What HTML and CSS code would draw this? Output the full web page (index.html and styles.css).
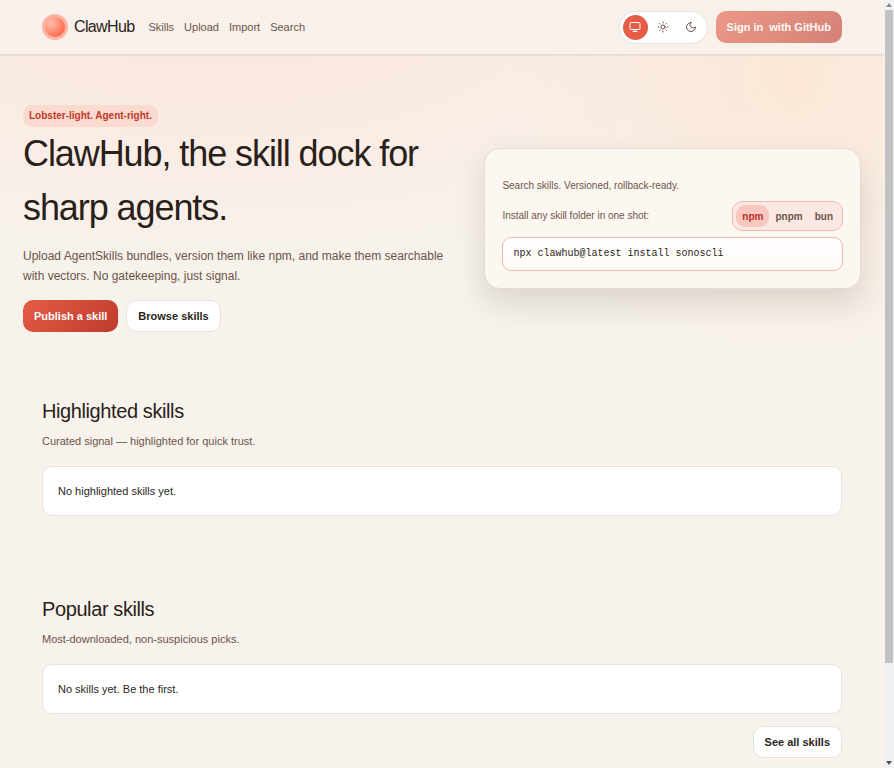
FILE: index.html
```html
<!DOCTYPE html>
<html lang="en">
<head>
    <meta charset="UTF-8">
    <meta name="viewport" content="width=device-width, initial-scale=1.0">
    <title>ClawHub</title>
    <link rel="stylesheet" href="styles.css">
</head>
<body>
    <div class="page">
        <header class="navbar">
            <a class="brand" href="#"><span class="brand-mark"></span>ClawHub</a>
            <nav class="nav-links">
                <a href="#">Skills</a>
                <a href="#">Upload</a>
                <a href="#">Import</a>
                <a href="#">Search</a>
            </nav>
            <div class="nav-actions">
                <div class="theme-toggle">
                    <button class="active" type="button" aria-label="System theme">
                        <svg viewBox="0 0 24 24"><rect x="2" y="3" width="20" height="14" rx="2"/><path d="M8 21h8M12 17v4"/></svg>
                    </button>
                    <button type="button" aria-label="Light theme">
                        <svg viewBox="0 0 24 24"><circle cx="12" cy="12" r="4"/><path d="M12 2v2M12 20v2M4.9 4.9l1.4 1.4M17.7 17.7l1.4 1.4M2 12h2M20 12h2M6.3 17.7l-1.4 1.4M19.1 4.9l-1.4 1.4"/></svg>
                    </button>
                    <button type="button" aria-label="Dark theme">
                        <svg viewBox="0 0 24 24"><path d="M12 3a6 6 0 0 0 9 9 9 9 0 1 1-9-9Z"/></svg>
                    </button>
                </div>
                <button class="btn btn-primary" type="button" disabled><span>Sign in</span><span>with GitHub</span></button>
            </div>
        </header>
        <main>
            <section class="hero">
                <div class="hero-copy">
                    <span class="hero-badge">Lobster-light. Agent-right.</span>
                    <h1>ClawHub, the skill dock for sharp agents.</h1>
                    <p>Upload AgentSkills bundles, version them like npm, and make them searchable with vectors. No gatekeeping, just signal.</p>
                    <div class="hero-buttons">
                        <a class="btn btn-primary" href="#">Publish a skill</a>
                        <a class="btn" href="#">Browse skills</a>
                    </div>
                </div>
                <div class="hero-card">
                    <p>Search skills. Versioned, rollback-ready.</p>
                    <div class="install-row">
                        <p>Install any skill folder in one shot:</p>
                        <div class="install-tabs">
                            <button class="active" type="button">npm</button>
                            <button type="button">pnpm</button>
                            <button type="button">bun</button>
                        </div>
                    </div>
                    <code class="install-command">npx clawhub@latest install sonoscli</code>
                </div>
            </section>
            <section class="section">
                <h2>Highlighted skills</h2>
                <p class="subtitle">Curated signal — highlighted for quick trust.</p>
                <div class="card">No highlighted skills yet.</div>
            </section>
            <section class="section">
                <h2>Popular skills</h2>
                <p class="subtitle">Most-downloaded, non-suspicious picks.</p>
                <div class="card">No skills yet. Be the first.</div>
                <div class="section-footer">
                    <a class="btn" href="#">See all skills</a>
                </div>
            </section>
        </main>
    </div>
    <div class="scrollbar">
        <svg viewBox="0 0 10 10"><path d="M5 3l3 4H2z" fill="#8b8b8b"/></svg>
        <div class="scroll-thumb"></div>
        <svg viewBox="0 0 10 10"><path d="M2 3h6L5 7z" fill="#505050"/></svg>
    </div>
</body>
</html>
```
FILE: styles.css
```css
* {
    box-sizing: border-box;
}
body {
    margin: 0;
    display: grid;
    grid-template-columns: 1fr 10px;
    font-family: "Liberation Sans", Arial, sans-serif;
    font-size: 11px;
    line-height: 18px;
    color: #2a1f19;
    background: #f7f2ec;
}
h1, h2, p {
    margin: 0;
    font-weight: 400;
}
a {
    color: inherit;
    text-decoration: none;
}
button {
    font-family: inherit;
    cursor: pointer;
}
.page {
    background:
        radial-gradient(circle at 90% 80px, rgba(255, 226, 202, 0.6), rgba(255, 226, 202, 0) 290px),
        radial-gradient(ellipse 640px 270px at 25% 0, rgba(255, 222, 210, 0.6), rgba(255, 222, 210, 0)),
        #f7f2ec;
}

/* header */
.navbar {
    display: flex;
    align-items: center;
    height: 55px;
    padding: 0 42px;
    background: rgba(247, 242, 238, 0.8);
    border-bottom: 1px solid #e4dad4;
    box-shadow: 0 1px 1px rgba(42, 31, 25, 0.05);
}
.brand {
    display: flex;
    align-items: center;
    gap: 6px;
    font-size: 16px;
    letter-spacing: -0.04em;
}
.brand-mark {
    width: 26px;
    height: 26px;
    border: 3px solid #ffb3a2;
    border-radius: 50%;
    background: radial-gradient(circle at 30% 30%, #ffc1ad, #ff6647 80%);
}
.nav-links {
    display: flex;
    gap: 10px;
    margin-left: 14px;
    font-size: 11px;
    color: #6b5549;
}
.nav-actions {
    display: flex;
    align-items: center;
    gap: 8px;
    margin-left: auto;
}
.theme-toggle {
    display: flex;
    gap: 3px;
    padding: 3px;
    background: #fff;
    border: 1px solid #e8e1dc;
    border-radius: 20px;
}
.theme-toggle button {
    display: grid;
    place-items: center;
    width: 25px;
    height: 25px;
    padding: 0;
    border: none;
    border-radius: 50%;
    background: none;
    color: #6b5549;
}
.theme-toggle .active {
    background: #e65c46;
    color: #fff;
}
.theme-toggle svg {
    width: 12px;
    height: 12px;
    fill: none;
    stroke: currentColor;
    stroke-width: 2;
    stroke-linecap: round;
    stroke-linejoin: round;
}
.btn {
    display: inline-flex;
    align-items: center;
    gap: 6px;
    height: 32px;
    padding: 0 11px;
    border: 1px solid #e8e1dc;
    border-radius: 10px;
    background: #fff;
    font-size: 11px;
    font-weight: 700;
    color: #2a1f19;
}
.btn-primary {
    border: none;
    background: linear-gradient(135deg, #e65c46, #bd3a2b);
    color: #fff;
}
.btn:disabled {
    opacity: 0.6;
}

/* hero */
.hero {
    display: grid;
    grid-template-columns: 7fr 6fr;
    gap: 22px;
    align-items: center;
    padding: 50px 23px;
}
.hero-copy {
    display: flex;
    flex-direction: column;
    align-items: flex-start;
}
.hero-badge {
    padding: 2px 6px;
    border-radius: 9px;
    background: #fbdad0;
    color: #bd3a2b;
    font-size: 10px;
    font-weight: 700;
}
h1 {
    font-size: 36px;
    line-height: 54px;
    letter-spacing: -0.03em;
}
.hero-copy p {
    margin: 11px 0 14px;
    font-size: 12px;
    line-height: 20px;
    color: #6b5549;
}
.hero-buttons {
    display: flex;
    gap: 8px;
}
.hero-card {
    display: grid;
    gap: 6px;
    padding: 28px 17px 17px;
    border: 1px solid #e6dcd5;
    border-radius: 16px;
    background: #fdf7f1;
    box-shadow: 0 14px 30px rgba(60, 35, 25, 0.14);
    font-size: 10px;
    color: #6b5549;
}
.install-row {
    display: flex;
    align-items: center;
    justify-content: space-between;
}
.install-tabs {
    display: flex;
    padding: 3px;
    border: 1px solid #efb9af;
    border-radius: 10px;
    background: #fbe8e2;
}
.install-tabs button {
    height: 22px;
    padding: 0 6px;
    border: none;
    border-radius: 9px;
    background: none;
    font-size: 10px;
    font-weight: 700;
    color: #6b5549;
}
.install-tabs .active {
    background: #f8c8c0;
    color: #bd2f27;
}
.install-command {
    padding: 7px 10px;
    border: 1px solid #efb9af;
    border-radius: 9px;
    background: linear-gradient(#fff, #fffaf7);
    font-family: "Liberation Mono", monospace;
    font-size: 10px;
    color: #2a1f19;
}

/* skill lists */
.section {
    padding: 14px 42px 64px;
}
.section:last-child {
    padding-bottom: 10px;
}
h2 {
    font-size: 20px;
    line-height: 30px;
    letter-spacing: -0.02em;
}
.subtitle {
    margin: 6px 0 16px;
    color: #6b5549;
}
.card {
    padding: 15px;
    border: 1px solid #e8e1dc;
    border-radius: 10px;
    background: #fff;
}
.section-footer {
    display: flex;
    justify-content: flex-end;
    margin-top: 12px;
}

/* scrollbar */
.scrollbar {
    position: sticky;
    top: 0;
    display: flex;
    flex-direction: column;
    height: 100vh;
    background: #f1f1f1;
}
.scrollbar svg {
    width: 10px;
    height: 10px;
}
.scroll-thumb {
    flex: 0 0 85%;
    margin: 0 1px auto;
    background: #c1c1c1;
}
```
